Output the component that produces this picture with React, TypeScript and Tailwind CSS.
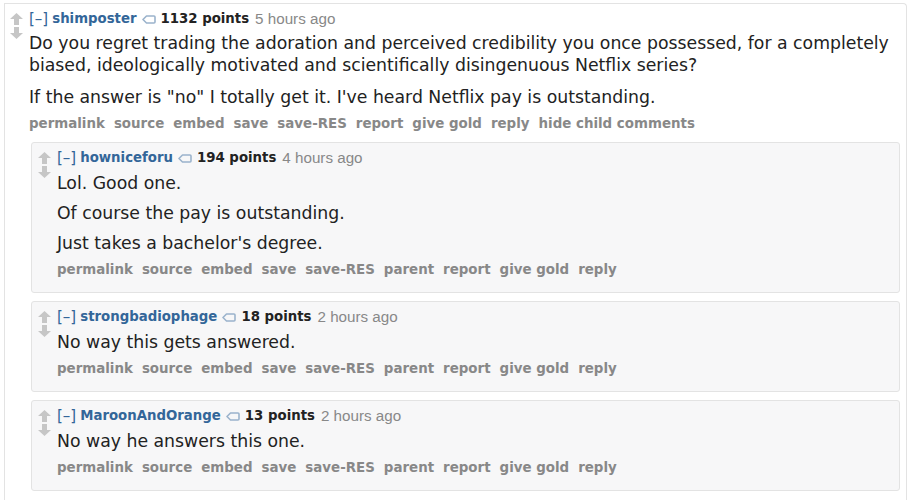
import React from "react";

const Arrows = () => (
  <div className="flex flex-col items-center w-[14px] shrink-0 pt-[3px] gap-[2px]">
    <svg width="13" height="12" viewBox="0 0 13 12">
      <path d="M6.5 0 L13 6 L9 6 L9 12 L4 12 L4 6 L0 6 Z" fill="#c6c6c6" />
    </svg>
    <svg width="13" height="12" viewBox="0 0 13 12">
      <path d="M6.5 12 L13 6 L9 6 L9 0 L4 0 L4 6 L0 6 Z" fill="#c6c6c6" />
    </svg>
  </div>
);

const TagIcon = () => (
  <svg width="14" height="9" viewBox="0 0 14 9" className="inline-block mx-[5px]">
    <path d="M4.5 1 H12 a1 1 0 0 1 1 1 V7 a1 1 0 0 1 -1 1 H4.5 L1 4.5 Z" fill="none" stroke="#9bb3cc" strokeWidth="1.6" strokeLinejoin="round" />
  </svg>
);

const Tagline = ({ user, points, time }: { user: string; points: string; time: string }) => (
  <div className="flex items-center text-[13.3px] leading-[18px] h-[18px] whitespace-nowrap font-['DejaVu_Sans',sans-serif]">
    <span className="text-[#369] text-[15px]">[–]</span>
    <span className="text-[#369] font-bold ml-[4px]">{user}</span>
    <TagIcon />
    <span className="text-[#222] font-bold">{points}</span>
    <span className="text-[#888] ml-[6px] font-['Liberation_Sans',sans-serif] text-[15.2px]">{time}</span>
  </div>
);

const Buttons = ({ items }: { items: string[] }) => (
  <div className="flex gap-[9px] text-[#888] font-bold text-[13.4px] leading-[18px] font-['DejaVu_Sans',sans-serif] whitespace-nowrap">
    {items.map((b) => (
      <span key={b}>{b}</span>
    ))}
  </div>
);

const Body = ({ paras, gap, mt }: { paras: string[]; gap: string; mt: string }) => (
  <div className={`text-[#222] text-[17.3px] leading-[22px] font-['DejaVu_Sans',sans-serif] flex flex-col ${gap} ${mt}`}>
    {paras.map((p) => (
      <p key={p}>{p}</p>
    ))}
  </div>
);

const childBtns = ["permalink", "source", "embed", "save", "save-RES", "parent", "report", "give gold", "reply"];

const Child = ({ user, points, time, paras }: { user: string; points: string; time: string; paras: string[] }) => (
  <div className="border border-[#e3e3e3] bg-[#f7f7f8] rounded-[3px] flex pl-[5px] pt-[6px] pb-[13px] gap-[6px]">
    <Arrows />
    <div className="flex-1">
      <Tagline user={user} points={points} time={time} />
      <Body paras={paras} gap="gap-[8px]" mt="mt-[5px]" />
      <div className="mt-[7px]">
        <Buttons items={childBtns} />
      </div>
    </div>
  </div>
);

export default function App() {
  return (
    <div className="w-[910px] h-[500px] bg-white overflow-hidden pt-[3px] pl-[4px] pr-[3px]">
      <div className="h-full border-l border-t border-r border-[#e3e3e3] rounded-tr-[4px] flex pl-[4px] pt-[6px] gap-[6px] pr-[6px]">
        <Arrows />
        <div className="flex-1">
          <Tagline user="shimposter" points="1132 points" time="5 hours ago" />
          <Body
            gap="gap-[10px]"
            mt="mt-[4px]"
            paras={[
              "Do you regret trading the adoration and perceived credibility you once possessed, for a completely biased, ideologically motivated and scientifically disingenuous Netflix series?",
              "If the answer is \"no\" I totally get it. I've heard Netflix pay is outstanding.",
            ]}
          />
          <div className="mt-[7px]">
            <Buttons items={["permalink", "source", "embed", "save", "save-RES", "report", "give gold", "reply", "hide child comments"]} />
          </div>
          <div className="ml-[2px] mt-[9px] flex flex-col gap-[8px]">
            <Child
              user="howniceforu"
              points="194 points"
              time="4 hours ago"
              paras={["Lol. Good one.", "Of course the pay is outstanding.", "Just takes a bachelor's degree."]}
            />
            <Child user="strongbadiophage" points="18 points" time="2 hours ago" paras={["No way this gets answered."]} />
            <Child user="MaroonAndOrange" points="13 points" time="2 hours ago" paras={["No way he answers this one."]} />
          </div>
        </div>
      </div>
    </div>
  );
}
